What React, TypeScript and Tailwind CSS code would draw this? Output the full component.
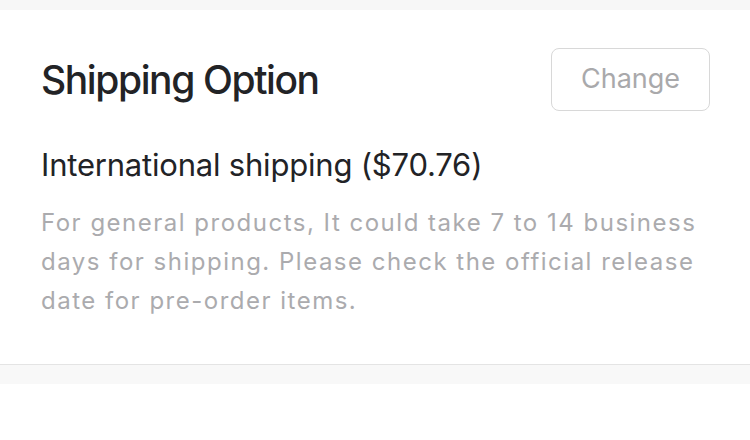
const App = () => {
  return (
    <div className="w-[750px] h-[440px] bg-white font-['Inter','Noto_Sans',sans-serif] overflow-hidden">
      <div className="h-[10px] bg-[#f7f7f7]" />
      <div className="px-[41px] pt-[38px] pb-[44px] border-b border-[#e4e4e4]">
        <div className="flex items-center justify-between">
          <h2 className="text-[39px] leading-[40px] font-medium text-[#222326] tracking-[-1.4px]">
            Shipping Option
          </h2>
          <button className="w-[159px] h-[63px] rounded-[8px] border-[1.5px] border-[#d8d8d8] text-[27px] text-[#a9a9ab] bg-white -mr-[1px]">
            Change
          </button>
        </div>
        <div className="mt-[36px] text-[31px] leading-[36px] text-[#222326] tracking-[-0.2px]">
          International shipping ($70.76)
        </div>
        <p className="mt-[20px] text-[24px] leading-[39px] text-[#ababae] tracking-[1.5px] whitespace-nowrap">
          For general products, It could take 7 to 14 business
          <br />
          days for shipping. Please check the official release
          <br />
          date for pre-order items.
        </p>
      </div>
      <div className="h-[19px] bg-[#f8f8f8]" />
    </div>
  );
};

export default App;
